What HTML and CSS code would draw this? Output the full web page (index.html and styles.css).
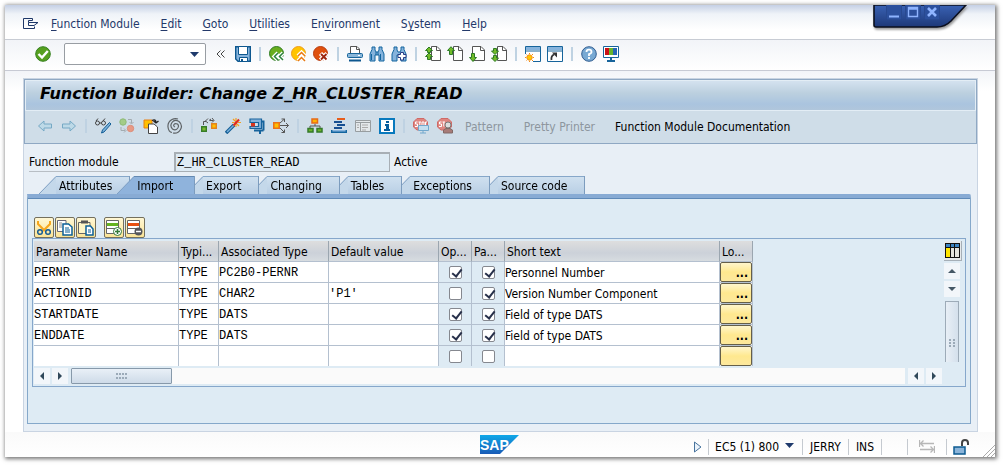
FILE: index.html
```html
<!DOCTYPE html>
<html lang="en">
<head>
<meta charset="utf-8">
<title>Function Builder: Change Z_HR_CLUSTER_READ</title>
<link rel="stylesheet" href="styles.css">
</head>
<body>
<div class="window">
  <div class="window-controls">
    <svg class="window-controls-shape" width="98" height="30" viewBox="0 0 98 30" aria-hidden="true">
      <defs><linearGradient id="wc" x1="0" y1="0" x2="0" y2="1"><stop offset="0" stop-color="#3a62b4"/><stop offset="1" stop-color="#1d3878"/></linearGradient></defs>
      <path d="M1 0V20Q1 22 3 22H64Q72 22 78 16L93 0Z" fill="url(#wc)" stroke="#0b0f1e" stroke-width="1.6"/>
    </svg>
    <div class="window-buttons">
      <button aria-label="Minimize"><svg width="14" height="14"><path d="M2 11.5H12" stroke="#8fb4ff" stroke-width="2"/></svg></button>
      <button aria-label="Maximize"><svg width="14" height="14"><path d="M2.5 2.5H11.5V11.5H2.5ZM2 4H12" fill="none" stroke="#8fb4ff" stroke-width="1.4"/></svg></button>
      <button aria-label="Close"><svg width="14" height="14"><path d="M3 3L11 11M11 3L3 11" stroke="#8fb4ff" stroke-width="2.6"/></svg></button>
    </div>
  </div>

  <nav class="menubar">
    <button class="menu-icon" aria-label="Window menu"><svg width="16" height="12" fill="none" stroke="#1d3768"><path d="M9.500 .5H.5V10.500H11.500V8.500M9.500 .5V2.500H5.500V4.500H15L11 7.500H5.500V4.500"/></svg></button>
    <button><u>F</u>unction Module</button>
    <button><u>E</u>dit</button>
    <button><u>G</u>oto</button>
    <button><u>U</u>tilities</button>
    <button>En<u>v</u>ironment</button>
    <button>S<u>y</u>stem</button>
    <button><u>H</u>elp</button>
  </nav>

  <div class="toolbar">
    <button class="icon enter" aria-label="Enter"><svg width="16" height="16"><circle cx="8" cy="8" r="7.300" fill="#56a01f" stroke="#35801f"/><path d="M3.500 8L7 11.500L12.800 5" fill="none" stroke="#fff" stroke-width="2.400"/></svg></button>
    <div class="command"><input aria-label="Command field"><button aria-label="Command history"><svg width="9" height="5"><path d="M0 0H9L4.500 5Z" fill="#1f3a6c"/></svg></button></div>
    <button class="collapse" aria-label="Hide command field"><svg width="9" height="8" fill="none" stroke="#444"><path d="M4.500 0.500L1 4L4.500 7.500M8.500 0.500L5 4L8.500 7.500"/></svg></button>
    <button class="icon" aria-label="Save"><svg width="16" height="16"><path d="M.7 .7H15.300V15.300H3L.7 13Z" fill="#86b3dc" stroke="#0d578f" stroke-width="1.400"/><path d="M3.500 .5H12.500V8.500H3.500Z" fill="#fff" stroke="#0d578f"/><path d="M4.500 11.500H12.500V15.500H4.500Z" fill="#fff" stroke="#0d578f"/><path d="M7 13V15" stroke="#0d578f" stroke-width="2"/></svg></button>
    <span class="sep"></span>
    <button class="icon" aria-label="Back"><svg width="16" height="16"><circle cx="7.500" cy="7.500" r="7" fill="#69ad1e" stroke="#2f7c24"/><path d="M9 7L5.500 10.500L9 14M14 7L10.500 10.500L14 14" fill="none" stroke="#fff" stroke-width="4"/><path d="M9 7L5.500 10.500L9 14M14 7L10.500 10.500L14 14" fill="none" stroke="#2b813b" stroke-width="1.500"/></svg></button>
    <button class="icon" aria-label="Exit"><svg width="16" height="16"><circle cx="7.500" cy="7.500" r="7" fill="#ffc400" stroke="#ef9b1d"/><path d="M7 10L10.500 6.500L14 10M7 15L10.500 11.500L14 15" fill="none" stroke="#fff" stroke-width="4"/><path d="M7 10L10.500 6.500L14 10M7 15L10.500 11.500L14 15" fill="none" stroke="#e87812" stroke-width="1.500"/></svg></button>
    <button class="icon" aria-label="Cancel"><svg width="16" height="16"><circle cx="7.500" cy="7.500" r="7" fill="#df500d" stroke="#b83d11"/><path d="M7.500 7.500L14 14M14 7.500L7.500 14" stroke="#fff" stroke-width="4.500"/><path d="M8 8L13.500 13.500M13.500 8L8 13.500" stroke="#9c250d" stroke-width="1.800"/></svg></button>
    <span class="sep"></span>
    <button class="icon" aria-label="Print"><svg width="16" height="16"><path d="M3.500 8V.5H10L12.500 3V8" fill="#fff" stroke="#555"/><path d="M9.500 .5V3.500H12.500" fill="none" stroke="#555"/><rect x=".5" y="7.500" width="15" height="4" rx="1" fill="#8ab6d9" stroke="#17649b"/><path d="M2 14.500H14" stroke="#0d578f" stroke-width="2"/><path d="M11 9.500H13" stroke="#fff"/></svg></button>
    <button class="icon" aria-label="Find"><svg width="16" height="16"><path d="M3 3.500V1H6V4L7 6H9L10 4V1H13V3.500L15 8V15H10V9H6V15H1V8Z" fill="#86b3dc" stroke="#12659f"/><path d="M7 6V9M9 6V9M2.500 8V14M11.500 8V14" stroke="#12659f"/></svg></button>
    <button class="icon" aria-label="Find next"><svg width="16" height="16"><path d="M3 3.500V1H6V4L7 6H9L10 4V1H13V3.500L15 8V15H10V9H6V15H1V8Z" fill="#86b3dc" stroke="#12659f"/><path d="M9.500 6.500H12.500V8.500H15V11.500H12.500V14H9.500V11.500H7V8.500H9.500Z" fill="#fff" stroke="#263e86"/></svg></button>
    <span class="sep"></span>
    <button class="icon" aria-label="First page"><svg width="16" height="16"><path d="M6.500 .5H12L15.500 4V14.500H6.500Z" fill="#fff" stroke="#555"/><path d="M11.500 .5V4.500H15.500" fill="none" stroke="#555"/><path d="M4 1L7.500 4.500H5.500V6.500H2.500V4.500H.5ZM4 7L7.500 10.500H5.500V13.500H2.500V10.500H.5Z" fill="#72bb28" stroke="#2c7b24"/></svg></button>
    <button class="icon" aria-label="Previous page"><svg width="16" height="16"><path d="M6.500 .5H12L15.500 4V14.500H6.500Z" fill="#fff" stroke="#555"/><path d="M11.500 .5V4.500H15.500" fill="none" stroke="#555"/><path d="M4 .7L7.500 4.500H5.500V8.500H2.500V4.500H.5Z" fill="#72bb28" stroke="#2c7b24"/></svg></button>
    <button class="icon" aria-label="Next page"><svg width="16" height="16"><path d="M3.500 .5H12L15.500 4V14.500H3.500Z" fill="#fff" stroke="#555"/><path d="M11.500 .5V4.500H15.500" fill="none" stroke="#555"/><path d="M4 15.500L.5 11.500H2.500V7.500H5.500V11.500H7.500Z" fill="#72bb28" stroke="#2c7b24"/></svg></button>
    <button class="icon" aria-label="Last page"><svg width="16" height="16"><path d="M6.500 .5H12L15.500 4V14.500H6.500Z" fill="#fff" stroke="#555"/><path d="M11.500 .5V4.500H15.500" fill="none" stroke="#555"/><path d="M4 8.500L.5 5H2.500V2.500H5.500V5H7.500ZM4 15.500L.5 12H2.500V9.500H5.500V12H7.500Z" fill="#72bb28" stroke="#2c7b24"/></svg></button>
    <span class="sep"></span>
    <button class="icon" aria-label="New session"><svg width="16" height="16"><path d="M.5 8V.5H15.500V15.500H8" fill="#fff" stroke="#17649b"/><path d="M1 1H15V4H1Z" fill="#86b3dc"/><path d="M0 5H16" stroke="#17649b"/><circle cx="4.500" cy="11.500" r="2.700" fill="#ffc800" stroke="#f58b16"/><path d="M4.500 7V8M4.500 15V16M0 11.500H1M8 11.500H9M1.500 8.500L2 9M7 14L8 15M1.500 14.500L2 14M7 9L8 8" stroke="#f58b16"/></svg></button>
    <button class="icon" aria-label="Create shortcut"><svg width="16" height="16"><path d="M.5 .5H15.500V15.500H.5Z" fill="#fff" stroke="#17649b"/><path d="M1 1H15V4H1Z" fill="#86b3dc"/><path d="M0 5H16" stroke="#17649b"/><path d="M4.500 14C4 11 5 9.500 7 8.500" fill="none" stroke="#333" stroke-width="1.800"/><path d="M5 6.500H10V11.500Z" fill="#333"/></svg></button>
    <span class="sep"></span>
    <button class="icon" aria-label="Help"><svg width="16" height="16"><circle cx="8" cy="8" r="7.300" fill="#78a9d3" stroke="#315d91"/><path d="M5.500 6Q5.500 3.700 8 3.700T10.500 6Q10.500 7.500 8 8.200V10M8 11V13" fill="none" stroke="#fff" stroke-width="1.800"/></svg></button>
    <button class="icon" aria-label="Customize layout"><svg width="16" height="16"><path d="M.5 .5H15.500V11.500H.5Z" fill="#fff" stroke="#17649b"/><path d="M2 2H6V9H2Z" fill="#c91115"/><path d="M6 2H10V9H6Z" fill="#67b52b"/><path d="M10 2H14V9H10Z" fill="#2866b4"/><path d="M8 11V14M4 15H12" stroke="#17649b" stroke-width="2"/></svg></button>
  </div>

  <main class="workspace">
    <section class="panel">
      <header class="title-block">
        <h1>Function Builder: Change Z_HR_CLUSTER_READ</h1>
        <div class="app-toolbar">
          <button class="icon" aria-label="Previous object"><svg width="16" height="16"><path d="M1.500 8L7 3V6H14.500V10H7V13Z" fill="#bdd9e7" stroke="#76a9c5"/></svg></button>
          <button class="icon" aria-label="Next object"><svg width="16" height="16"><path d="M14.500 8L9 3V6H1.500V10H9V13Z" fill="#bdd9e7" stroke="#76a9c5"/></svg></button>
          <span class="sep"></span>
          <button class="icon" aria-label="Display or change"><svg width="16" height="16"><circle cx="2.500" cy="5" r="2" fill="none" stroke="#444"/><circle cx="8.500" cy="5" r="2" fill="none" stroke="#444"/><path d="M1 3L3 .5M8 3L10 .5M4.500 5H6.500" stroke="#444"/><path d="M14.500 4.500L16 6L9 14L6.500 15L7.500 12Z" fill="#80b4db" stroke="#115c95"/></svg></button>
          <button class="icon" aria-label="Active or inactive"><svg width="16" height="16"><circle cx="4" cy="4" r="3.200" fill="#a3cc88" stroke="#8fbb78"/><circle cx="11.500" cy="10.500" r="3.200" fill="#e79a86" stroke="#dd8d79"/><path d="M9 1.500H12.500V5M10.500 4L12.500 6L14.500 4M2 9V12.500H6M5 10.500L7 12.500L5 14.500" fill="none" stroke="#a3abb0"/></svg></button>
          <button class="icon" aria-label="Other object"><svg width="16" height="16"><path d="M1 2H9V10H1Z" fill="#ffc000" stroke="#e87e12"/><path d="M5.500 6H11L14.500 9V15.500H5.500Z" fill="#fff" stroke="#444"/><path d="M9 2.500Q13 .5 13 5M10.500 3L13 5L15.500 3" fill="none" stroke="#222" stroke-width="1.300"/></svg></button>
          <button class="icon" aria-label="Enhance"><svg width="16" height="16"><path d="M8 9Q6 8 7 6.500T10.500 6Q12.500 8 10.500 10.500T5.500 11Q2.500 8 5 4.500T12 3.500Q16 7 13.500 11.500T6 15M5 1.500Q.5 4 1 9T5 14.500M5 1.500Q8 0 11 1" fill="none" stroke="#5e6366" stroke-width="1.200"/></svg></button>
          <span class="sep"></span>
          <button class="icon" aria-label="Check"><svg width="16" height="16"><path d="M.7 8.700H5.300V13.300H.7Z" fill="#7bb832" stroke="#367d27" stroke-width="1.400"/><path d="M10.700 5.700H15.300V10.300H10.700Z" fill="#ffc000" stroke="#e2821d" stroke-width="1.400"/><path d="M2.500 7V3.500H5M8 2.500L10 1M7 .5L4.500 3L7 5M9 2.500H12.500M11 0L13 2.500L11 4.500" fill="none" stroke="#555"/></svg></button>
          <button class="icon" aria-label="Activate"><svg width="16" height="16"><path d="M1 15L9 7" stroke="#155e95" stroke-width="3.500"/><path d="M2 14L9 7" stroke="#77afdc" stroke-width="1.500"/><path d="M11 0V3M11 6V9M7 4.500H9.500M13 4.500H16M8 1L10 3M12 6L14 8" stroke="#f2a021" stroke-width="1.200"/><path d="M8.500 7.500L14 1.500" stroke="#e22a1c" stroke-width="2"/><circle cx="11" cy="4.500" r="1.200" fill="#e22a1c"/></svg></button>
          <button class="icon" aria-label="Test"><svg width="16" height="16"><path d="M1 1H12.500V10.500H1V8.500H9.500V4.500H1Z" fill="#86b3dc" stroke="#16639c" stroke-width="1.200"/><path d="M12.500 3.500H14.500V12.500M5 12.500H14.500M11 12V16" fill="none" stroke="#16639c" stroke-width="2"/><path d="M2 5H6V8.500H2Z" fill="#d8341c"/></svg></button>
          <button class="icon" aria-label="Where-used list"><svg width="16" height="16"><path d="M.8 4.800H6.200V10.200H.8Z" fill="#ffc000" stroke="#eb7319" stroke-width="1.600"/><path d="M7 7.500H15.500M13 5L15.500 7.500L13 10M7 5L11.500 1M8.500 1H11.500V4M7 10L11.500 14.500M8.500 14.500H11.500V11.500" fill="none" stroke="#555"/></svg></button>
          <span class="sep"></span>
          <button class="icon" aria-label="Object list"><svg width="16" height="16"><path d="M5 1H10.500V5H5Z" fill="#ffb400" stroke="#e66a18" stroke-width="1.500"/><path d="M8 6V8M3 10V8H13V10" fill="none" stroke="#555"/><path d="M1 10.500H6V14H1ZM10 10.500H15V14H10Z" fill="#6eb42b" stroke="#34792a" stroke-width="1.500"/></svg></button>
          <button class="icon" aria-label="Navigation stack"><svg width="16" height="16"><path d="M6 1H14" stroke="#e75d1b" stroke-width="2"/><path d="M3 4H11M6 7H14M3 10H11" stroke="#174f91" stroke-width="2"/><path d="M.7 12V14.300H15.300V12" fill="#86b3dc" stroke="#12659f" stroke-width="1.400"/></svg></button>
          <button class="icon" aria-label="Fullscreen"><svg width="16" height="16"><path d="M.5 2.500H15.500V13.500H.5ZM1 4.500H15M5.500 5V13" fill="#e3e8eb" stroke="#979da0"/><path d="M2 7H4M7 7H13M2 9.500H4M7 9.500H13M7 12H11" stroke="#aaa"/></svg></button>
          <button class="icon" aria-label="Information"><svg width="16" height="16"><path d="M1 1H15V15H1Z" fill="#fff" stroke="#0879bd" stroke-width="2"/><path d="M7 3H10V5H7ZM6 6H10V11H11V13H5V11H7V8H6Z" fill="#075d9c"/></svg></button>
          <span class="sep"></span>
          <button class="icon" aria-label="Session breakpoint"><svg width="16" height="16"><path d="M4 .5H11L14.500 4V9L11 12H4L.5 9V4Z" fill="#de8580" stroke="#cf6a67"/><path d="M4.500 4H2.500V6H4.500V8.500H2M5.500 4H8M6.800 4V8.500M9 4H11V8H9ZM12.500 8V4H14" fill="none" stroke="#fff"/><path d="M5.500 7.500H15.500V12.500H5.500Z" fill="#c3dff1" stroke="#72a8cd"/><path d="M10 13V15M7 15H13" stroke="#72a8cd"/></svg></button>
          <button class="icon" aria-label="External breakpoint"><svg width="16" height="16"><path d="M4 .5H11L14.500 4V9L11 12H4L.5 9V4Z" fill="#de8580" stroke="#cf6a67"/><path d="M4.500 4H2.500V6H4.500V8.500H2M5.500 4H8M6.800 4V8.500" fill="none" stroke="#fff"/><circle cx="11" cy="7" r="3" fill="#ddd" stroke="#777"/><path d="M6.500 15V12L9 10.500H13L15.500 12V15Z" fill="#a77b78" stroke="#806966"/></svg></button>
          <button class="text-button" disabled>Pattern</button>
          <button class="text-button" disabled>Pretty Printer</button>
          <button class="text-button">Function Module Documentation</button>
        </div>
      </header>

      <div class="form-row">
        <label for="fm">Function module</label>
        <input id="fm" class="mono" value="Z_HR_CLUSTER_READ" readonly>
        <span>Active</span>
      </div>

      <div class="tabs" role="tablist">
        <button role="tab" class="tab"><svg class="slant" width="17" height="18"><path d="M0 18L17 0V18Z"/><path class="edge" d="M0 18L17 .5"/></svg><span>Attributes</span></button>
        <button role="tab" class="tab active" aria-selected="true"><svg class="slant" width="17" height="18"><path d="M0 18L17 0V18Z"/><path class="edge" d="M0 18L17 .5"/></svg><span>Import</span></button>
        <button role="tab" class="tab"><svg class="slant" width="17" height="18"><path d="M0 18L17 0V18Z"/><path class="edge" d="M0 18L17 .5"/></svg><span>Export</span></button>
        <button role="tab" class="tab"><svg class="slant" width="17" height="18"><path d="M0 18L17 0V18Z"/><path class="edge" d="M0 18L17 .5"/></svg><span>Changing</span></button>
        <button role="tab" class="tab"><svg class="slant" width="17" height="18"><path d="M0 18L17 0V18Z"/><path class="edge" d="M0 18L17 .5"/></svg><span>Tables</span></button>
        <button role="tab" class="tab"><svg class="slant" width="17" height="18"><path d="M0 18L17 0V18Z"/><path class="edge" d="M0 18L17 .5"/></svg><span>Exceptions</span></button>
        <button role="tab" class="tab"><svg class="slant" width="17" height="18"><path d="M0 18L17 0V18Z"/><path class="edge" d="M0 18L17 .5"/></svg><span>Source code</span></button>
      </div>

      <div class="tab-body" role="tabpanel">
        <div class="grid-tools">
          <button class="yellow" aria-label="Cut"><svg width="16" height="16"><path d="M2 1V4L9 11M14 1V4L7 11" fill="none" stroke="#f6a61c" stroke-width="2"/><circle cx="4" cy="12" r="2.300" fill="none" stroke="#175d94" stroke-width="1.500"/><circle cx="12" cy="12" r="2.300" fill="none" stroke="#175d94" stroke-width="1.500"/></svg></button>
          <button class="yellow" aria-label="Copy"><svg width="16" height="16"><path d="M.5 .5H9V11.500H.5Z" fill="#fff" stroke="#667"/><path d="M2 3H5M2 5H5M2 7H5" stroke="#888"/><path d="M6 4H11.500L15 7V15H6Z" fill="#fff" stroke="#0b6098" stroke-width="1.500"/><path d="M8 8H12M8 10H13M8 12H13" stroke="#0b6098"/></svg></button>
          <button class="yellow" aria-label="Paste"><svg width="16" height="16"><path d="M.5 2.500H12V13.500H.5Z" fill="#fff6c7" stroke="#666"/><path d="M3 2H10" stroke="#555" stroke-width="3"/><path d="M8 6H12.500L15 9V15H8Z" fill="#fff" stroke="#0b6098" stroke-width="1.500"/><path d="M10 10H13M10 12H13" stroke="#0b6098"/></svg></button>
          <span class="tool-space"></span>
          <button class="yellow" aria-label="Insert row"><svg width="16" height="16"><path d="M.5 .5H12.500V13.500H.5Z" fill="#fff" stroke="#666"/><path d="M1 3H12V6H1Z" fill="#65b31f"/><path d="M1 8.500H12" stroke="#666"/><circle cx="11.500" cy="11.500" r="4" fill="#fff" stroke="#347a3a"/><path d="M9 11.500H14M11.500 9V14" stroke="#347a3a" stroke-width="1.500"/></svg></button>
          <button class="yellow" aria-label="Delete row"><svg width="16" height="16"><path d="M.5 .5H12.500V13.500H.5Z" fill="#fff" stroke="#666"/><path d="M1 3H12V6H1Z" fill="#e85012"/><path d="M1 8.500H12" stroke="#666"/><circle cx="11.500" cy="11.500" r="4" fill="#55565a"/><path d="M9 11.500H14" stroke="#fff" stroke-width="1.500"/></svg></button>
        </div>

        <div class="grid-box">
          <div class="grid-main">
            <table>
              <colgroup><col class="c-name"><col class="c-typing"><col class="c-type"><col class="c-type"><col class="c-small"><col class="c-small"><col class="c-text"><col class="c-small"></colgroup>
              <thead><tr><th>Parameter Name</th><th>Typi...</th><th>Associated Type</th><th>Default value</th><th>Op...</th><th>Pa...</th><th>Short text</th><th>Lo...</th></tr></thead>
              <tbody>
                <tr><td class="mono">PERNR</td><td class="mono">TYPE</td><td class="mono">PC2B0-PERNR</td><td></td><td class="check"><input type="checkbox" aria-label="Optional" checked></td><td class="check"><input type="checkbox" aria-label="Pass value" checked></td><td>Personnel Number</td><td class="long"><button aria-label="Long text">...</button></td></tr>
                <tr><td class="mono">ACTIONID</td><td class="mono">TYPE</td><td class="mono">CHAR2</td><td class="mono">'P1'</td><td class="check"><input type="checkbox" aria-label="Optional"></td><td class="check"><input type="checkbox" aria-label="Pass value" checked></td><td>Version Number Component</td><td class="long"><button aria-label="Long text">...</button></td></tr>
                <tr><td class="mono">STARTDATE</td><td class="mono">TYPE</td><td class="mono">DATS</td><td></td><td class="check"><input type="checkbox" aria-label="Optional" checked></td><td class="check"><input type="checkbox" aria-label="Pass value" checked></td><td>Field of type DATS</td><td class="long"><button aria-label="Long text">...</button></td></tr>
                <tr><td class="mono">ENDDATE</td><td class="mono">TYPE</td><td class="mono">DATS</td><td></td><td class="check"><input type="checkbox" aria-label="Optional" checked></td><td class="check"><input type="checkbox" aria-label="Pass value" checked></td><td>Field of type DATS</td><td class="long"><button aria-label="Long text">...</button></td></tr>
                <tr><td></td><td></td><td></td><td></td><td class="check"><input type="checkbox" aria-label="Optional"></td><td class="check"><input type="checkbox" aria-label="Pass value"></td><td></td><td class="long"><button aria-label="Long text"></button></td></tr>
              </tbody>
            </table>
            <div class="vscroll">
              <button class="config" aria-label="Table settings"><svg width="15" height="15"><path d="M0 0H15V15H0Z" fill="#111"/><path d="M1 1H14V4H1Z" fill="#3b83c1"/><path d="M1 5H5V14H1Z" fill="#ffe500"/><path d="M6 5H9V14H6ZM10 5H14V14H10Z" fill="#e4e4de"/><path d="M5.500 1V4M9.500 1V4" stroke="#111"/></svg></button>
              <button class="arrow" aria-label="Scroll up"><svg width="8" height="4"><path d="M0 4L4 0L8 4Z" fill="#465866"/></svg></button>
              <button class="arrow" aria-label="Scroll down"><svg width="8" height="4"><path d="M0 0H8L4 4Z" fill="#465866"/></svg></button>
              <div class="vthumb"><svg width="6" height="8"><path d="M1 0V8M5 0V8" stroke="#9baab8" stroke-width="2" stroke-dasharray="2 1"/></svg></div>
            </div>
          </div>
          <div class="hscroll">
            <button class="arrow" aria-label="Scroll left"><svg width="4" height="8"><path d="M4 0V8L0 4Z" fill="#30485a"/></svg></button>
            <button class="arrow" aria-label="Scroll right"><svg width="4" height="8"><path d="M0 0V8L4 4Z" fill="#30485a"/></svg></button>
            <div class="htrack"><div class="hthumb"><svg width="12" height="6"><path d="M0 1H12M0 5H12" stroke="#9baab8" stroke-width="2" stroke-dasharray="2 1"/></svg></div></div>
            <button class="arrow" aria-label="Scroll left"><svg width="4" height="8"><path d="M4 0V8L0 4Z" fill="#30485a"/></svg></button>
            <button class="arrow" aria-label="Scroll right"><svg width="4" height="8"><path d="M0 0V8L4 4Z" fill="#30485a"/></svg></button>
          </div>
        </div>
      </div>
    </section>
  </main>

  <footer class="statusbar">
    <svg class="logo" width="39" height="19" viewBox="0 0 39 19" role="img" aria-label="SAP">
      <defs><linearGradient id="lg" x1="0" y1="0" x2="0" y2="1"><stop offset="0" stop-color="#10a8e8"/><stop offset="1" stop-color="#195bb6"/></linearGradient></defs>
      <path d="M0 0H39L20 19H0Z" fill="url(#lg)"/><text class="logo-text" x="0" y="15">SAP</text>
    </svg>
    <div class="status-items">
      <button class="expand" aria-label="Show fields"><svg width="8" height="12"><path d="M.5 1V11L7 6Z" fill="#eaf2fa" stroke="#47739d"/></svg></button>
      <button class="system">EC5 (1) 800<svg width="9" height="5"><path d="M0 0H9L4.500 5Z" fill="#1f3a6c"/></svg></button>
      <span class="cell">JERRY</span>
      <span class="cell">INS</span>
      <span class="cell blank"></span>
      <span class="cell swap"><svg width="16" height="13" fill="none" stroke="#b7b7b7"><path d="M.5 0V7M2 3.500H15M4.500 .5L1.500 3.500L4.500 6.500M15.500 6V13M1 9.500H14M11.500 6.500L14.500 9.500L11.500 12.500" stroke-width="1.300"/></svg></span>
      <span class="cell lock"><svg width="17" height="16"><path d="M9 7V4Q9 1 12 1T15 4V6" fill="none" stroke="#444" stroke-width="2"/><path d="M1 8H12V15H1Z" fill="#8bb4d9" stroke="#0d5b91" stroke-width="1.500"/></svg></span>
    </div>
    <svg class="grip" width="12" height="12" stroke="#aaa"><path d="M0 12L12 0M4 12L12 4M8 12L12 8"/></svg>
  </footer>
</div>
</body>
</html>
```

FILE: styles.css
```css
* { box-sizing: border-box; }
body {
  margin: 0;
  padding: 5px 9px 9px 5px;
  background: #fff;
  color: #000;
  font: 12px/16px "DejaVu Sans Condensed", "DejaVu Sans", sans-serif;
}
button { font: inherit; color: inherit; border: 0; padding: 0; background: none; white-space: nowrap; }
input { font: inherit; margin: 0; border-radius: 0; }
svg { display: block; flex: none; }
.mono { font-family: "Liberation Mono", monospace; }

.window {
  position: relative;
  display: flex;
  flex-direction: column;
  min-height: calc(100vh - 14px);
  background: #fff;
  box-shadow: 1px 1px 4px 1px #777;
}
.window-controls { position: absolute; top: 0; right: 24px; }
.window-controls-shape { filter: drop-shadow(1px 2px 1px #999); }
.window-buttons { position: absolute; top: 0; left: 13px; display: flex; gap: 3px; }
.window-buttons button { border: 1px solid #284990; border-top: 0; border-radius: 0 0 2px 2px; background: #2c509d; }

.menubar {
  display: flex;
  align-items: center;
  gap: 21px;
  height: 35px;
  padding: 4px 18px 0;
  border-bottom: 1px solid #c8ccd4;
  background: linear-gradient(#c5d0e5, #eff3f8 9px, #fff 25px);
  color: #24396a;
}
.menubar .menu-icon { margin-right: -9px; }
.menubar u { text-underline-offset: 2px; }

.toolbar, .app-toolbar { display: flex; align-items: center; }
.toolbar {
  gap: 6px;
  height: 31px;
  padding: 0 30px 2px;
  border-bottom: 1px solid #c7cad4;
  background: linear-gradient(#f2f4f8, #fff);
}
.sep { flex: none; width: 2px; height: 14px; background: #bfd2e2; }
.toolbar .sep { margin: 0 2px; }
.command {
  display: flex;
  width: 142px;
  height: 22px;
  margin: 0 4px 0 7px;
  border: 1px solid #989da3;
  border-radius: 2px;
  background: #fff;
}
.command input { flex: 1; min-width: 0; border: 0; background: none; outline: 0; }
.command button { padding: 0 6px; }
.collapse { margin-right: 4px; }

.workspace { flex: 1; display: flex; padding: 7px 17px 0 18px; background: linear-gradient(#f2f4f8, #fff 20px); }
.panel { flex: 1; display: flex; flex-direction: column; min-width: 0; border: 1px solid #c9d4e2; background: #e8eff6; }
.title-block { border: 1px solid #8fa8c3; }
h1 {
  margin: 0;
  padding: 0 14px 3px;
  border: 1px solid #e3edf5;
  background: linear-gradient(#d4e2ef, #bcd0df 12px, #aac4df 23px, #b0c6dc);
  font: italic bold 16px/26px "DejaVu Sans", sans-serif;
}
.app-toolbar { gap: 8px; height: 32px; padding: 0 12px 2px; background: #cfdde8; }
.text-button { margin-left: 4px; padding-top: 2px; }
.text-button + .text-button { margin-left: 12px; }
.text-button:disabled { color: #8d969e; }

.form-row { display: flex; align-items: center; padding: 8px 5px 0; }
.form-row label { width: 145px; padding-top: 1px; border-bottom: 1px solid #b8bec4; line-height: 18px; }
.form-row input { width: 216px; height: 20px; margin-right: 4px; padding: 0 1px; border: 2px solid #a8afb5; border-right-width: 1px; border-bottom-width: 1px; background: #deebf4; }

.tabs { display: flex; padding: 4px 0 0 15px; }
.tab { position: relative; display: flex; height: 18px; margin-right: -8px; filter: drop-shadow(1px 0 0 #7c9cbe); }
.tab span { padding: 0 17px 0 3px; border-top: 1px solid #86a7c9; background: linear-gradient(#cfe0ef, #b9cfe5); line-height: 18px; }
.slant { fill: #c4d8ea; }
.slant .edge { fill: none; stroke: #7f9fc2; }
.tab:nth-child(1) { z-index: 7; margin-right: -12px; }
.tab:nth-child(2) { z-index: 8; }
.tab:nth-child(3) { z-index: 6; }
.tab:nth-child(4) { z-index: 5; }
.tab:nth-child(5) { z-index: 4; }
.tab:nth-child(6) { z-index: 3; }
.tab:nth-child(7) { z-index: 2; }
.tab.active span { padding-right: 21px; background: #8fb3dc; border-top-color: #6489b2; }
.tab.active .slant { fill: #8fb3dc; }

.tab-body {
  flex: 1;
  margin: 0 6px 7px 3px;
  padding: 19px 4px 16px;
  border: 1px solid #85a8ca;
  border-top: 4px solid #88abd4;
  border-radius: 0 2px 0 0;
  background: #deebf4;
  box-shadow: inset 0 1px 0 #5f8ab8;
}
.grid-tools { display: flex; gap: 1px; padding-left: 2px; }
.yellow { display: grid; place-items: center; width: 20px; height: 21px; border: 1px solid #74705d; border-radius: 2px; background: linear-gradient(#fff7d4, #fbe496); }
.tool-space { width: 6px; }
.grid-box { border: 1px solid #86a7cb; padding: 2px 3px 2px 1px; }
.grid-main { display: flex; justify-content: space-between; }
table { width: 719px; table-layout: fixed; border-collapse: separate; border-spacing: 0; }
.c-name { width: 145px; }
.c-typing { width: 40px; }
.c-type { width: 110px; }
.c-small { width: 33px; }
.c-text { width: 215px; }
th, td { height: 21px; padding: 2px 0 0; border-right: 1px solid #b4c0cf; border-bottom: 1px solid #b4c0cf; background: #fff; text-align: left; line-height: 16px; white-space: nowrap; overflow: hidden; }
th { padding-left: 2px; border-right-color: #9ba6b0; background: linear-gradient(#dedede, #ccd1d9 60%, #d7dce0); font-weight: normal; }
tbody tr:last-child td { border-bottom: 0; height: 20px; }
td.check { padding: 0; background: #deebf4; text-align: center; }
.check input {
  appearance: none;
  display: block;
  position: relative;
  width: 13px;
  height: 13px;
  margin: 0 auto;
  border: 1px solid #85888f;
  border-radius: 2px;
  background: #fff;
}
.check input:checked::after { content: ""; position: absolute; left: 4px; top: 0; width: 4px; height: 8px; border: solid #27304a; border-width: 0 2px 2px 0; transform: rotate(38deg); }
td.long { padding: 0; }
.long button { display: block; width: 100%; height: 20px; padding: 2px 3px 0 0; border: 1px solid #655f49; border-radius: 2px; background: linear-gradient(#fff6cc, #ffe88f 50%, #fce89d); text-align: right; font-weight: bold; }

.vscroll { display: flex; flex-direction: column; width: 18px; gap: 2px; }
.arrow { display: grid; place-items: center; flex: none; width: 16px; height: 16px; background: #f2f6fa; }
.config { display: grid; place-items: center; height: 20px; border: solid #a6afb7; border-width: 0 1px 1px 0; background: #e6e9eb; }
.vthumb { flex: 1; display: grid; place-items: center; width: 14px; margin: 2px 0 4px 1px; padding-top: 22px; border: 1px solid #9dabb8; border-bottom: 0; background: linear-gradient(90deg, #e8eff6, #d4e0ec); }
.hscroll { display: flex; gap: 2px; padding: 2px 20px 0 0; }
.htrack { flex: 1; margin: 0 1px; background: #fafafa; }
.hthumb { display: grid; place-items: center; width: 101px; height: 16px; border: 1px solid #8799aa; border-radius: 1px; background: linear-gradient(#e9f0f7, #cedbe8); }

.statusbar { position: relative; display: flex; align-items: center; height: 25px; padding: 0 25px 0 475px; background: linear-gradient(#fafafa, #fff); }
.logo-text { font: bold 14px "Liberation Sans", Arial, sans-serif; fill: #fff; }
.status-items { display: flex; align-items: center; margin-left: auto; padding-top: 4px; }
.expand { margin-right: 6px; }
.system, .cell { display: flex; align-items: center; height: 16px; padding: 0 7px; border-left: 1px solid #c5cad0; }
.system { padding-left: 6px; }
.system svg { margin: 0 1px 3px 6px; }
.blank { width: 26px; }
.swap { padding: 0 11px; }
.lock { padding: 0 0 0 6px; }
.grip { position: absolute; right: 0; bottom: 0; }
```
